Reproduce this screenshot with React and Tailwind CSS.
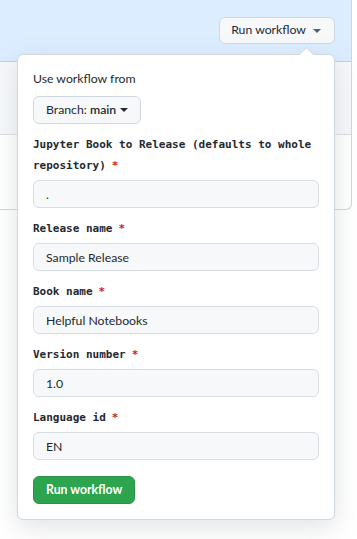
const FIELDS = [
  { label: 'Jupyter Book to Release (defaults to whole repository)', value: '.' },
  { label: 'Release name', value: 'Sample Release' },
  { label: 'Book name', value: 'Helpful Notebooks' },
  { label: 'Version number', value: '1.0' },
  { label: 'Language id', value: 'EN' },
];

function Caret({ className = '' }) {
  return (
    <svg viewBox="0 0 8 4" className={`h-[4px] w-[8px] fill-current ${className}`}>
      <path d="M0 0h8L4 4z" />
    </svg>
  );
}

export default function App() {
  return (
    <div className="relative min-h-[539px] bg-white font-['Lato',sans-serif] text-[#24292f]">
      {/* Workflow box behind the popup */}
      <div className="mr-[5px] overflow-hidden rounded-br-md border-r border-b border-[#d0d7de]">
        <div className="flex h-[62px] items-start justify-end border-b border-[#b6d3f0] bg-[#dbedff] pt-[17px] pr-[16px]">
          <button className="flex h-[27px] items-center gap-[7px] rounded-md border border-[#d0d7de] bg-[#f6f8fa] pl-[11px] pr-[13px] text-[12.25px] leading-none">
            Run workflow
            <Caret className="text-[#57606a]" />
          </button>
        </div>
        <div className="h-[73px] border-b border-[#d8dee4] bg-[#f6f8fa]" />
        <div className="h-[74px]" />
      </div>

      {/* Dropdown popup */}
      <div className="absolute left-[17px] top-[54px] w-[318px] rounded-md border border-[#d0d7de] bg-white px-[15px] pt-[14px] pb-[15px] shadow-[0_8px_24px_rgba(140,149,159,0.25)]">
        <div className="absolute -top-[6px] right-[22px] h-[11px] w-[11px] rotate-45 border-l border-t border-[#d0d7de] bg-white" />
        <p className="text-[12.25px] leading-[20px]">Use workflow from</p>
        <button className="mt-[7px] flex h-[28px] items-center gap-[4px] rounded-md border border-[#d0d7de] bg-[#f6f8fa] px-[12px] text-[12.25px] leading-none">
          <span>
            Branch: <span className="font-semibold">main</span>
          </span>
          <Caret />
        </button>

        <div className="mt-[10px]">
          {FIELDS.map((f) => (
            <div key={f.label} className="mb-[10px]">
              <label className="block font-['DejaVu_Sans_Mono',monospace] text-[11px] font-semibold leading-[21px] text-[#24292f]">
                {f.label}
                <span className="ml-[6px] text-[#cf222e]">*</span>
              </label>
              <input
                readOnly
                value={f.value}
                className="mt-[4px] block h-[28px] w-full rounded-md border border-[#d8dee4] bg-[#f6f8fa] px-[12px] text-[12.25px] text-[#24292f] outline-none"
              />
            </div>
          ))}
        </div>

        <button className="mt-[6px] h-[28px] rounded-md border border-[#2a9147] bg-[#2da44e] px-[12px] text-[12.25px] font-bold leading-none text-white">
          Run workflow
        </button>
      </div>
    </div>
  );
}
